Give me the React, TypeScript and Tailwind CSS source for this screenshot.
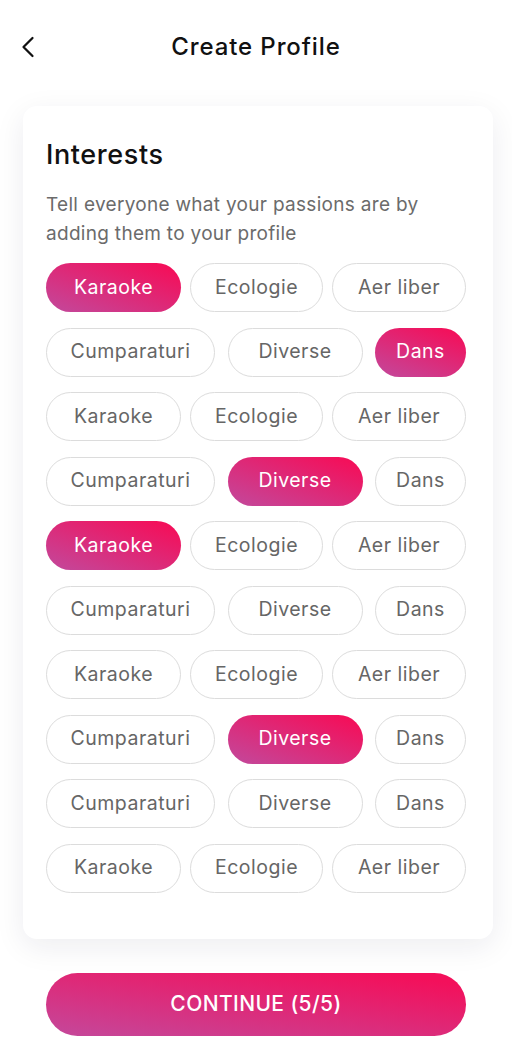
import { ChevronLeft } from "lucide-react";

const rows: [string, boolean][][] = [
  [["Karaoke", true], ["Ecologie", false], ["Aer liber", false]],
  [["Cumparaturi", false], ["Diverse", false], ["Dans", true]],
  [["Karaoke", false], ["Ecologie", false], ["Aer liber", false]],
  [["Cumparaturi", false], ["Diverse", true], ["Dans", false]],
  [["Karaoke", true], ["Ecologie", false], ["Aer liber", false]],
  [["Cumparaturi", false], ["Diverse", false], ["Dans", false]],
  [["Karaoke", false], ["Ecologie", false], ["Aer liber", false]],
  [["Cumparaturi", false], ["Diverse", true], ["Dans", false]],
  [["Cumparaturi", false], ["Diverse", false], ["Dans", false]],
  [["Karaoke", false], ["Ecologie", false], ["Aer liber", false]],
];

// fixed chip widths, measured from the design
const widths: Record<string, string> = {
  Karaoke: "w-[135px]",
  Ecologie: "w-[133px]",
  "Aer liber": "w-[134px]",
  Cumparaturi: "w-[169px]",
  Diverse: "w-[135px]",
  Dans: "w-[91px]",
};

function Chip({ label, active }: { label: string; active: boolean }) {
  return (
    <div
      className={`${widths[label]} h-[49px] rounded-full flex items-center justify-center text-[19.5px] tracking-[0.5px] ${
        active
          ? "bg-[linear-gradient(200deg,#f3105b_10%,#c2499c_100%)] text-white"
          : "border border-[#dcdcdc] text-[#666666] bg-white"
      }`}
    >
      {label}
    </div>
  );
}

export default function App() {
  return (
    <div
      className="w-[512px] h-[1063px] bg-white flex flex-col overflow-hidden"
      style={{ fontFamily: "Inter, 'Noto Sans', sans-serif" }}
    >
      {/* header */}
      <div className="relative h-[94px] flex items-center justify-center">
        <ChevronLeft size={36} strokeWidth={1.5} className="absolute left-[10px] top-[29px] text-[#111]" />
        <h1 className="text-[24px] font-medium text-[#111] tracking-[0.9px]">Create Profile</h1>
      </div>

      {/* card */}
      <div className="ml-[23px] mr-[19px] mt-[12px] rounded-[14px] bg-white shadow-[0_8px_30px_rgba(30,30,60,0.08)] pl-[23px] pr-[27px] pt-[29px] pb-[46px]">
        <h2 className="text-[27px] leading-[39px] font-medium text-[#111] tracking-[0.6px]">Interests</h2>
        <p className="mt-[16px] text-[19px] leading-[29px] text-[#6b6b6b] tracking-[0.3px]">
          Tell everyone what your passions are by adding them to your profile
        </p>
        <div className="mt-[15px] flex flex-col gap-[15.5px]">
          {rows.map((row, i) => (
            <div key={i} className="flex justify-between">
              {row.map(([label, active], j) => (
                <Chip key={j} label={label} active={active} />
              ))}
            </div>
          ))}
        </div>
      </div>

      {/* continue */}
      <div className="px-[46px] mt-[34px]">
        <button className="w-full h-[63px] rounded-full bg-[linear-gradient(188deg,#f3105b_10%,#c4489b_100%)] text-white text-[21px] font-medium tracking-[0.4px]">
          CONTINUE (5/5)
        </button>
      </div>
    </div>
  );
}
